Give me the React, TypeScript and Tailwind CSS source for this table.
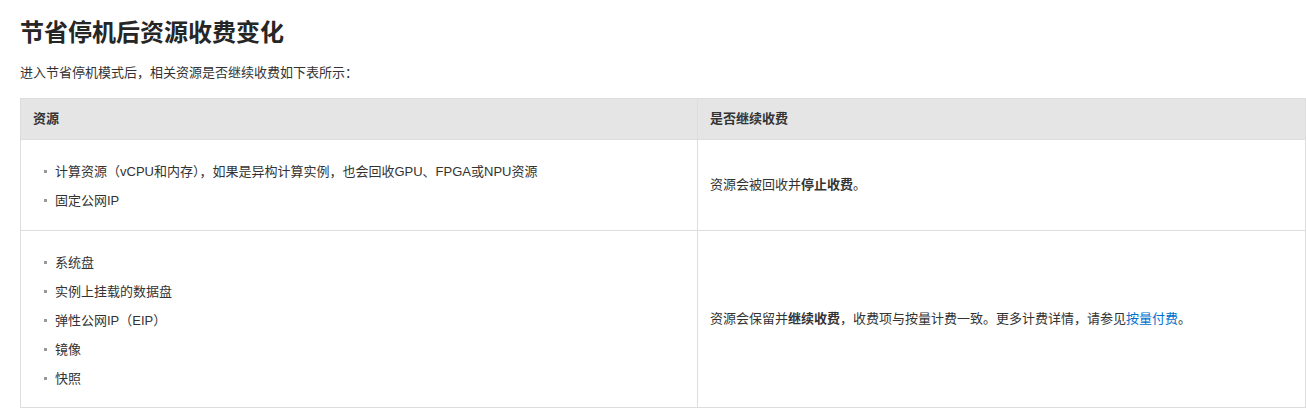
const font = { fontFamily: '"Liberation Sans", "Noto Sans CJK SC", sans-serif' };

function Bullets({ items }: { items: string[] }) {
  return (
    <ul className="flex flex-col">
      {items.map((t) => (
        <li key={t} className="flex h-[29px] items-center">
          <span className="ml-[11px] mr-[8px] h-[3px] w-[3px] bg-[#999]" />
          <span>{t}</span>
        </li>
      ))}
    </ul>
  );
}

export default function App() {
  return (
    <div className="bg-white px-5 text-[#333]" style={font}>
      <h1 className="pt-[19px] text-[24px] font-bold leading-[28px] text-[#262626]">
        节省停机后资源收费变化
      </h1>
      <p className="mt-[17px] text-[13px] leading-[18px]">
        进入节省停机模式后，相关资源是否继续收费如下表所示：
      </p>
      <table className="mt-[16px] w-[1286px] border-collapse text-left text-[13px]">
        <thead>
          <tr className="h-[41px] bg-[#e5e5e5]">
            <th className="w-[677px] border border-[#dddddd] px-3 font-bold">资源</th>
            <th className="border border-[#dddddd] px-3 font-bold">是否继续收费</th>
          </tr>
        </thead>
        <tbody>
          <tr>
            <td className="border border-[#dddddd] px-3 pt-[17px] pb-[15px] align-top">
              <Bullets
                items={[
                  "计算资源（vCPU和内存），如果是异构计算实例，也会回收GPU、FPGA或NPU资源",
                  "固定公网IP",
                ]}
              />
            </td>
            <td className="border border-[#dddddd] px-3 align-middle">
              资源会被回收并<b className="font-bold">停止收费</b>。
            </td>
          </tr>
          <tr>
            <td className="border border-[#dddddd] px-3 pt-[17px] pb-[14px] align-top">
              <Bullets items={["系统盘", "实例上挂载的数据盘", "弹性公网IP（EIP）", "镜像", "快照"]} />
            </td>
            <td className="border border-[#dddddd] px-3 align-middle">
              资源会保留并<b className="font-bold">继续收费</b>，收费项与按量计费一致。更多计费详情，请参见
              <a className="text-[#0070cc]">按量付费</a>。
            </td>
          </tr>
        </tbody>
      </table>
    </div>
  );
}
